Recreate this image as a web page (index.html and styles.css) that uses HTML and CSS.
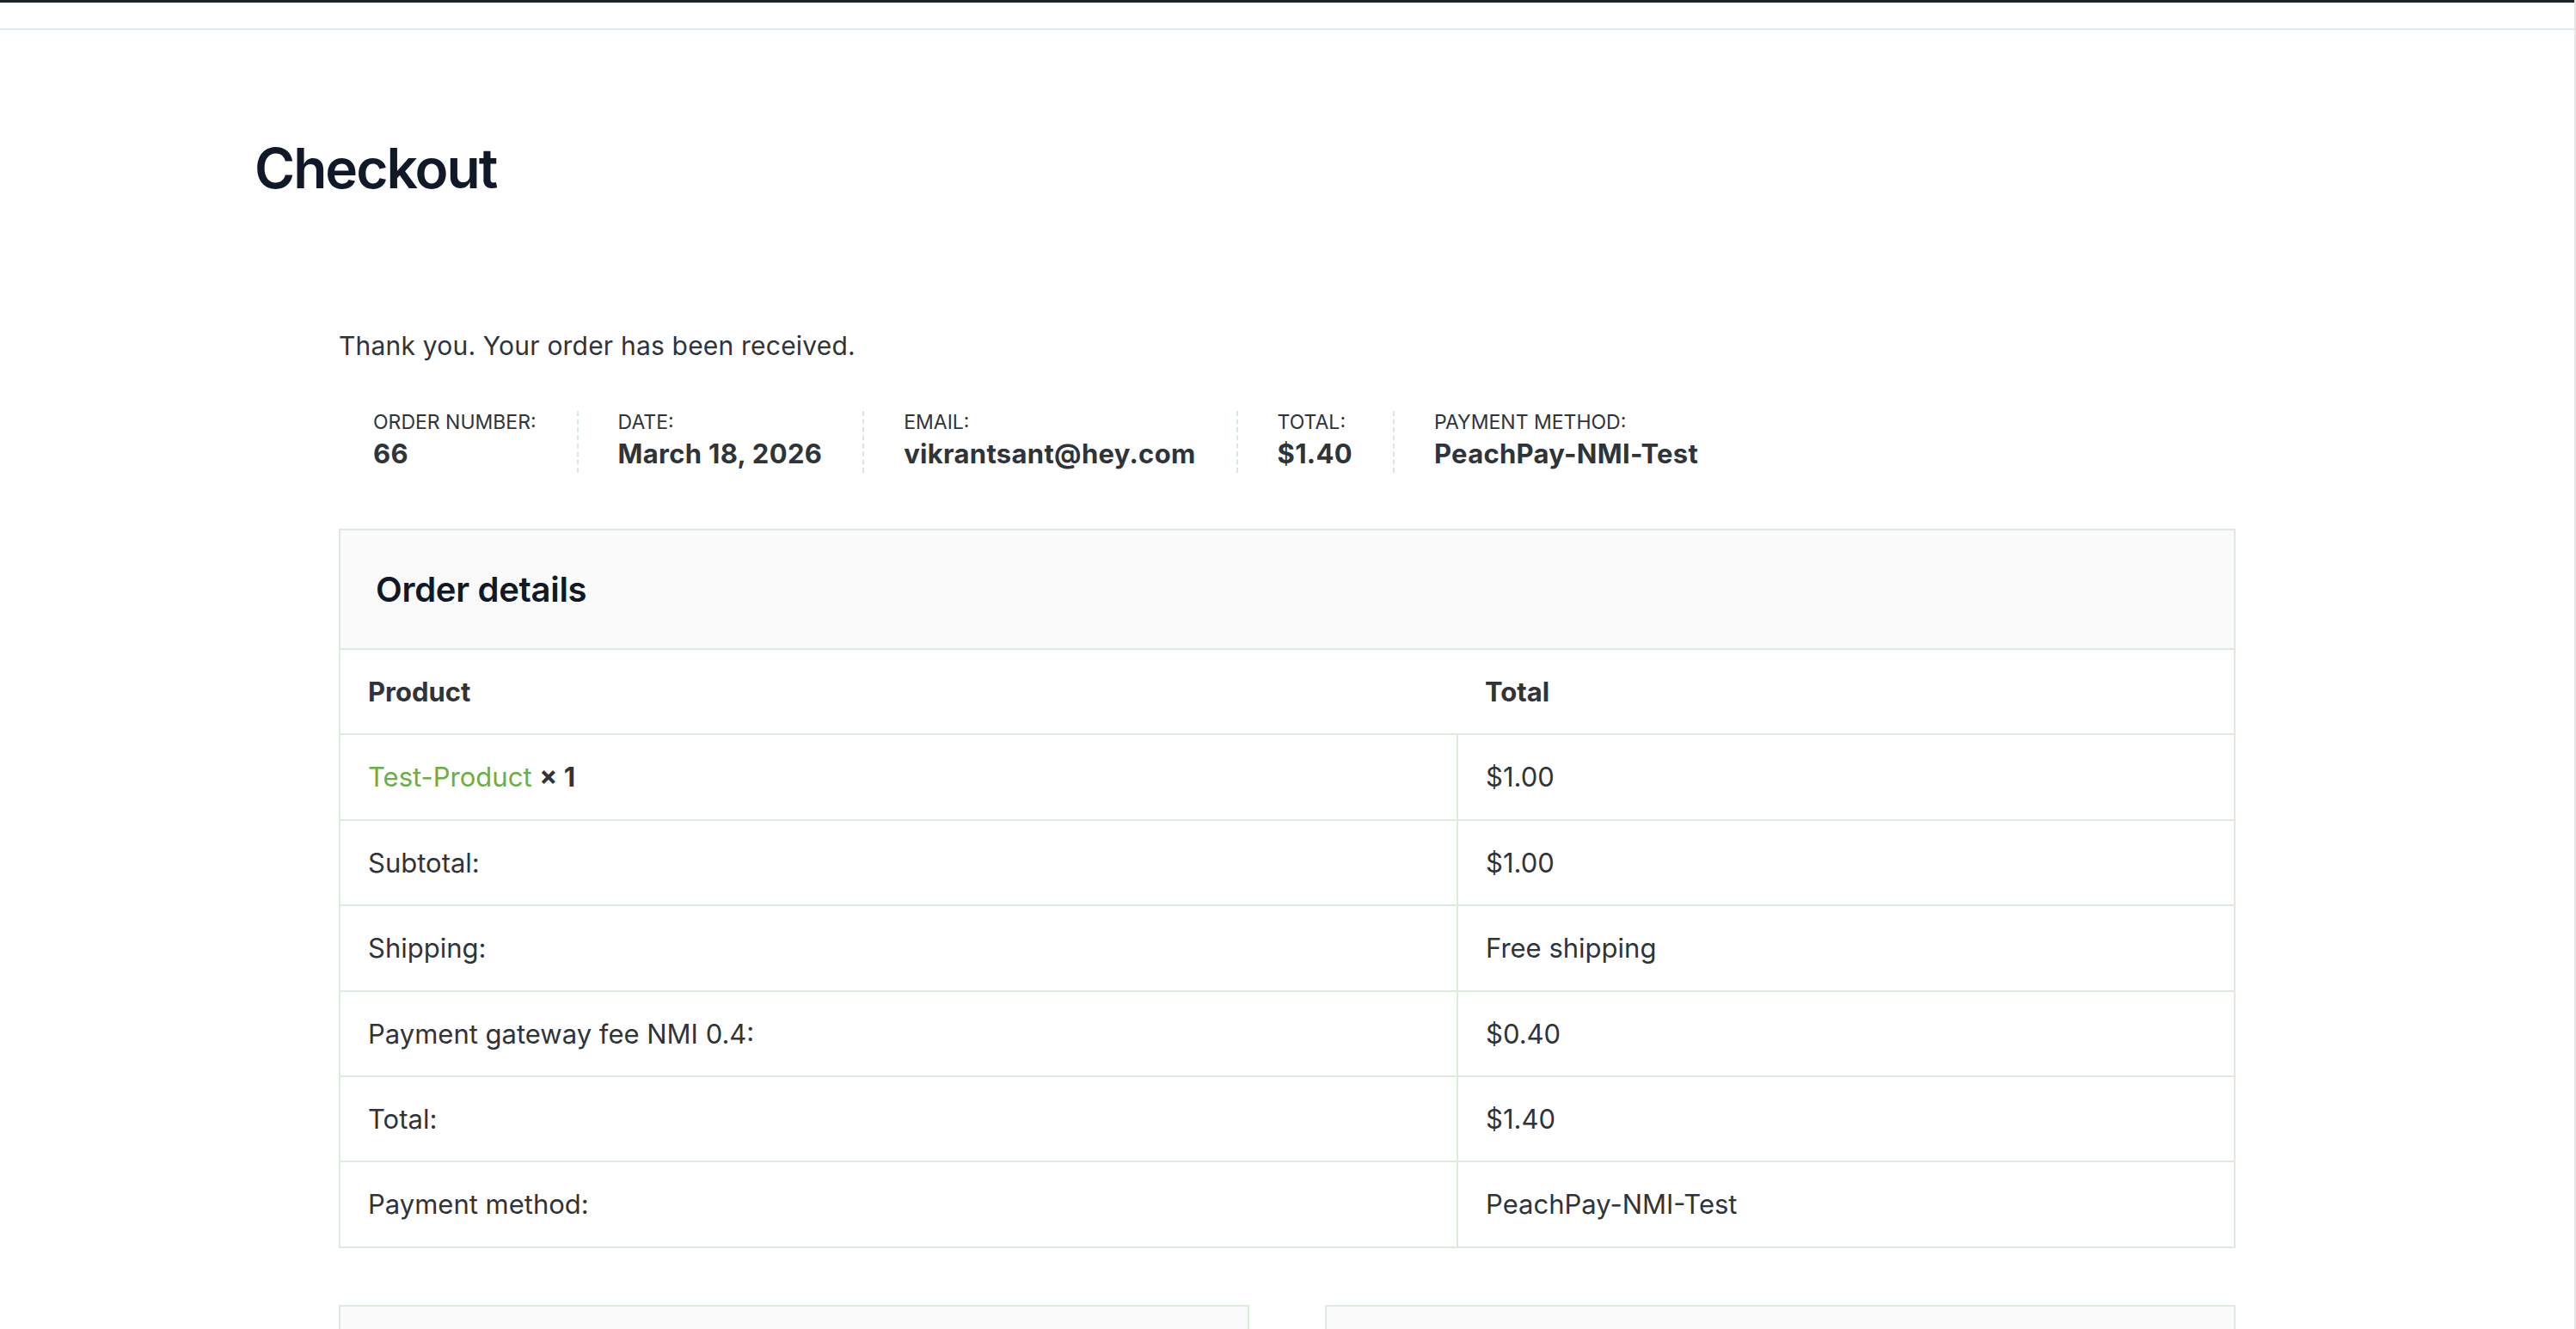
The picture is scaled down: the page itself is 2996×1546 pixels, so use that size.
FILE: index.html
```html
<!DOCTYPE html>
<html lang="en">
<head>
    <meta charset="UTF-8">
    <title>Checkout</title>
    <link rel="stylesheet" href="styles.css">
</head>
<body>

<div class="page">
    <div class="admin-bar"></div>
    <header class="site-header"></header>

    <main class="content">
        <h1 class="page-title">Checkout</h1>

        <div class="order-received">
            <p class="thanks">Thank you. Your order has been received.</p>

            <ul class="order-overview">
                <li>
                    <span class="label">Order number:</span>
                    <strong>66</strong>
                </li>
                <li>
                    <span class="label">Date:</span>
                    <strong>March 18, 2026</strong>
                </li>
                <li>
                    <span class="label">Email:</span>
                    <strong>vikrantsant@hey.com</strong>
                </li>
                <li>
                    <span class="label">Total:</span>
                    <strong>$1.40</strong>
                </li>
                <li>
                    <span class="label">Payment method:</span>
                    <strong>PeachPay-NMI-Test</strong>
                </li>
            </ul>

            <section class="order-details">
                <h2>Order details</h2>
                <table class="details-table">
                    <colgroup>
                        <col class="col-product">
                        <col>
                    </colgroup>
                    <thead>
                        <tr>
                            <th>Product</th>
                            <th>Total</th>
                        </tr>
                    </thead>
                    <tbody>
                        <tr>
                            <td><a href="#" class="product-link">Test-Product</a> <strong>&times;&nbsp;1</strong></td>
                            <td>$1.00</td>
                        </tr>
                        <tr>
                            <td>Subtotal:</td>
                            <td>$1.00</td>
                        </tr>
                        <tr>
                            <td>Shipping:</td>
                            <td>Free shipping</td>
                        </tr>
                        <tr>
                            <td>Payment gateway fee NMI 0.4:</td>
                            <td>$0.40</td>
                        </tr>
                        <tr>
                            <td>Total:</td>
                            <td>$1.40</td>
                        </tr>
                        <tr>
                            <td>Payment method:</td>
                            <td>PeachPay-NMI-Test</td>
                        </tr>
                    </tbody>
                </table>
            </section>

            <div class="addresses">
                <section class="address-box">
                    <div class="address-head"></div>
                </section>
                <section class="address-box">
                    <div class="address-head"></div>
                </section>
            </div>
        </div>
    </main>
</div>

</body>
</html>
```

FILE: styles.css
```css
html, body {
    margin: 0;
    padding: 0;
    height: 100%;
    overflow: hidden;
}
body {
    font-family: Inter, "Noto Sans", sans-serif;
    color: #2f3438;
    background: #fff;
}
.page {
    min-height: 100%;
    border-right: 2px solid #e5e5e5;
}
.admin-bar {
    height: 3px;
    background: #1d2327;
}
.site-header {
    height: 30px;
    border-bottom: 2px solid #dcebdc;
}
.content {
    padding: 0 394px 0 296px;
}
.page-title {
    margin: 122px 0 0;
    font-size: 64px;
    line-height: 77px;
    font-weight: 600;
    letter-spacing: -2px;
    color: #111827;
}
.order-received {
    margin-left: 98px;
}
.thanks {
    margin: 146px 0 0;
    font-size: 30px;
    line-height: 45px;
    letter-spacing: 0.2px;
}
.order-overview {
    display: flex;
    list-style: none;
    margin: 53px 0 0;
    padding: 0 0 0 40px;
}
.order-overview li {
    display: flex;
    flex-direction: column;
    padding-right: 47px;
    margin-right: 46px;
    border-right: 2px dashed #d9e9da;
}
.order-overview li:last-child {
    border-right: none;
}
.order-overview .label {
    font-size: 23px;
    line-height: 26px;
    text-transform: uppercase;
    font-weight: 400;
}
.order-overview strong {
    margin-top: 2px;
    font-size: 31px;
    line-height: 44px;
    font-weight: 700;
    letter-spacing: 0.3px;
}
.order-details {
    margin-top: 65px;
    border: 2px solid #dcebdc;
}
.order-details h2 {
    margin: 0;
    padding: 40px 41px;
    font-size: 40px;
    line-height: 57px;
    font-weight: 600;
    letter-spacing: -0.3px;
    color: #111827;
    background: #fafafa;
    border-bottom: 2px solid #dcebdc;
}
.details-table {
    width: 100%;
    border-collapse: collapse;
    table-layout: fixed;
    font-size: 31px;
}
.col-product {
    width: 1299px;
}
.details-table th,
.details-table td {
    padding: 27px 32px 26px;
    line-height: 44.4px;
    text-align: left;
    border-bottom: 2px solid #dcebdc;
}
.details-table th {
    font-weight: 700;
}
.details-table td {
    font-weight: 400;
}
.details-table td:first-child {
    border-right: 2px solid #dcebdc;
}
.details-table tbody tr:last-child td {
    border-bottom: none;
}
.details-table strong {
    font-weight: 700;
}
.product-link {
    color: #6aae47;
    text-decoration: none;
}
.addresses {
    display: grid;
    grid-template-columns: 1fr 1fr;
    gap: 88px;
    margin-top: 66px;
}
.address-box {
    height: 300px;
    border: 2px solid #dcebdc;
}
.address-head {
    height: 137px;
    background: #fafafa;
}
```
